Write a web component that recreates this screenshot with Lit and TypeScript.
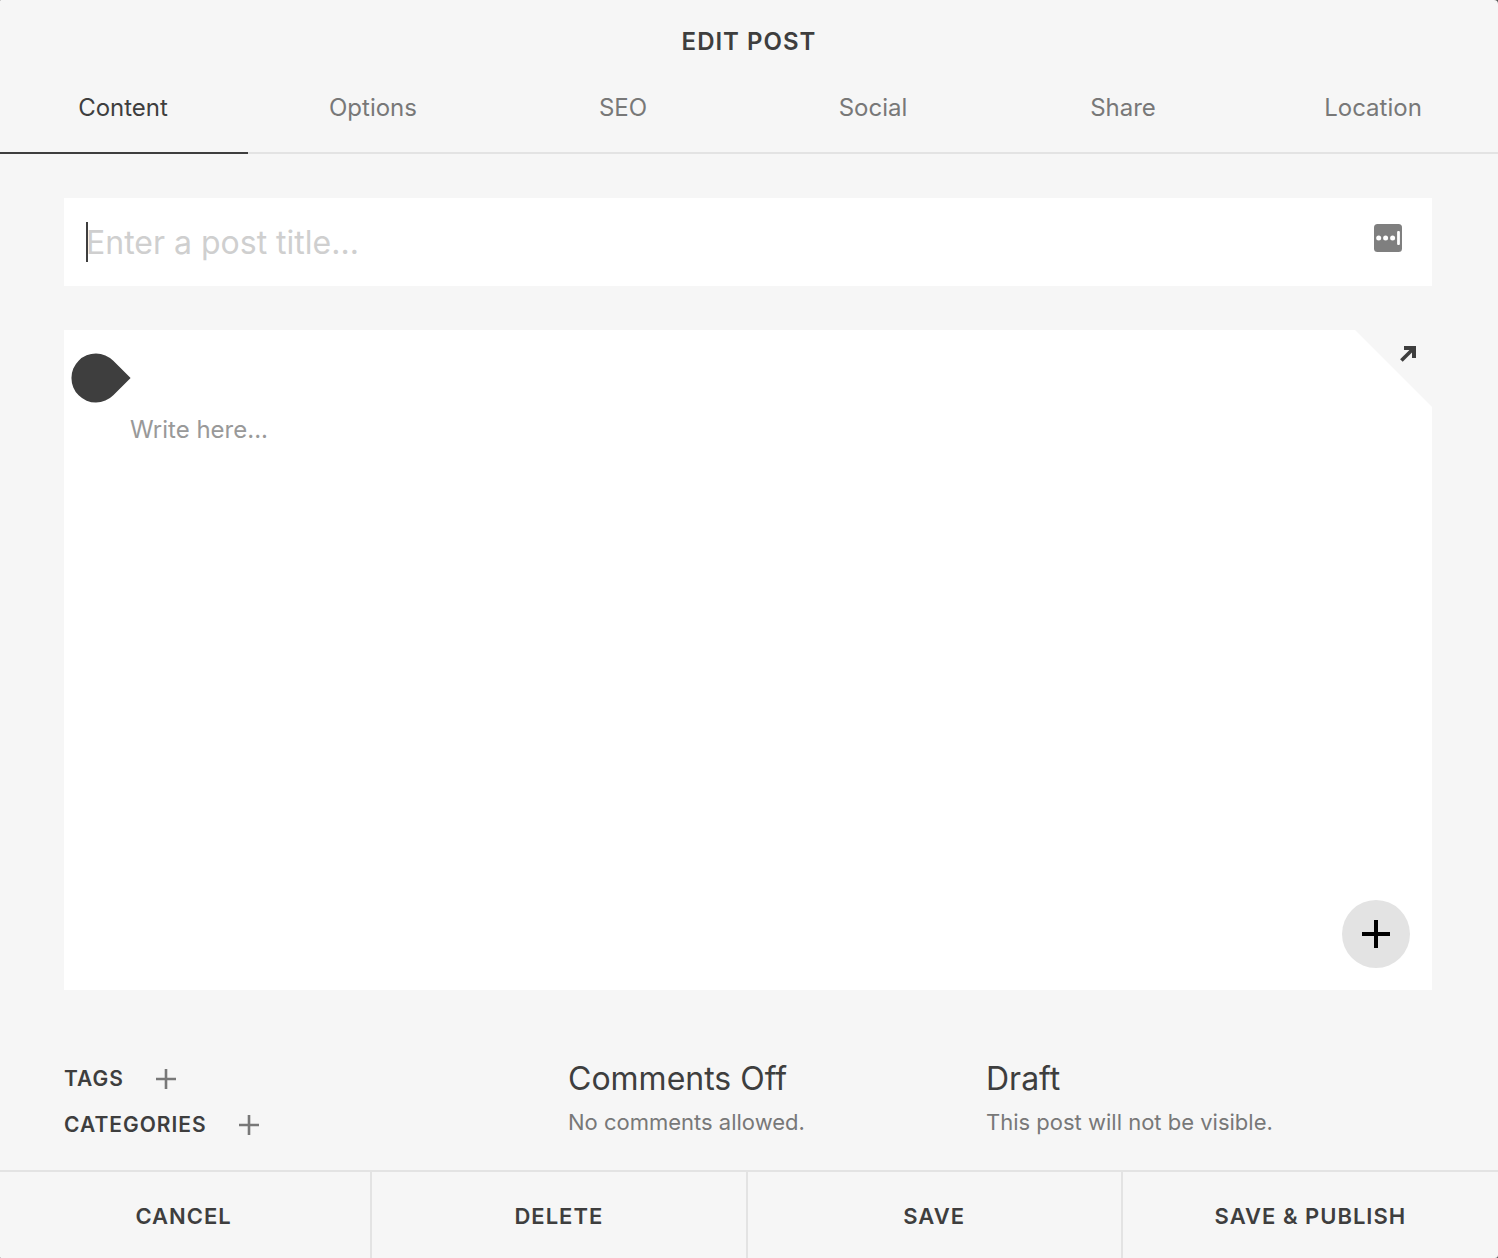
import { LitElement, html, css } from "lit";
import { customElement, state } from "lit/decorators.js";
import { classMap } from "lit/directives/class-map.js";

const TABS = ["Content", "Options", "SEO", "Social", "Share", "Location"];
const ACTIONS = ["Cancel", "Delete", "Save", "Save & Publish"];

@customElement("app-root")
export class AppRoot extends LitElement {
  static styles = css`
    :host {
      display: block;
      background: #555;
      color: #3e3e3e;
      font-family: Inter, "Liberation Sans", sans-serif;
      font-size: 24px;
      line-height: 32px;
    }
    * {
      box-sizing: border-box;
    }
    button,
    input,
    textarea {
      margin: 0;
      padding: 0;
      border: 0;
      border-radius: 0;
      outline: none;
      background: none;
      color: inherit;
      font: inherit;
    }
    button {
      cursor: pointer;
    }
    svg {
      display: block;
    }
    .panel {
      display: flex;
      flex-direction: column;
      min-height: 100vh;
      overflow: hidden;
      background: #f6f6f6;
      border-radius: 1px 4px 3px 1px;
    }
    .title {
      margin: 0;
      padding: 26px 0 18px;
      font-size: 24px;
      font-weight: 600;
      line-height: 32px;
      letter-spacing: 1px;
      text-align: center;
      text-transform: uppercase;
    }
    .tabs {
      display: grid;
      grid-template-columns: repeat(6, 1fr);
      margin-left: -2px;
    }
    .tab {
      height: 78px;
      padding-bottom: 12px;
      border-bottom: 2px solid #e3e3e3;
      color: #787878;
    }
    .tab.active {
      border-color: #3e3e3e;
      color: #3e3e3e;
    }
    .body {
      display: flex;
      flex: 1;
      flex-direction: column;
      gap: 44px;
      padding: 44px 66px 0 64px;
    }
    .title-field {
      position: relative;
      display: flex;
      align-items: center;
      gap: 16px;
      height: 88px;
      padding: 0 30px 0 22px;
      background: #fff;
    }
    .title-input {
      flex: 1;
      min-width: 0;
      height: 88px;
      font-size: 32px;
      font-weight: 400;
    }
    .title-input::placeholder {
      color: #cfcfcf;
      opacity: 1;
    }
    .caret {
      position: absolute;
      left: 22px;
      top: 24px;
      width: 2px;
      height: 40px;
      background: #3e3e3e;
    }
    .autofill {
      padding-bottom: 8px;
    }
    .editor {
      position: relative;
      display: flex;
      flex: 1;
      min-height: 300px;
    }
    .sheet {
      display: flex;
      flex: 1;
      background: #fff;
      clip-path: polygon(
        0 0,
        calc(100% - 77px) 0,
        100% 77px,
        100% 100%,
        0 100%
      );
    }
    .text {
      flex: 1;
      padding: 84px 66px 24px;
      resize: none;
    }
    .text::placeholder {
      color: #999;
      opacity: 1;
    }
    .marker {
      position: absolute;
      left: 7px;
      top: 23px;
    }
    .expand {
      position: absolute;
      right: 12px;
      top: 12px;
      padding: 4px;
    }
    .insert {
      position: absolute;
      right: 22px;
      bottom: 22px;
      display: grid;
      place-items: center;
      width: 68px;
      height: 68px;
      border-radius: 50%;
      background: #e3e3e3;
      color: #000;
    }
    .meta {
      display: grid;
      grid-template-columns: 504fr 418fr 446fr;
      padding: 66px 66px 22px 64px;
    }
    .terms {
      display: flex;
      flex-direction: column;
    }
    .term {
      display: flex;
      align-items: center;
      gap: 32px;
      height: 46px;
      font-size: 21px;
      font-weight: 600;
      letter-spacing: 1px;
      text-transform: uppercase;
    }
    .add {
      color: #787878;
    }
    .status {
      display: flex;
      flex-direction: column;
      align-items: flex-start;
      text-align: left;
    }
    .status-name {
      font-size: 32px;
      line-height: 46px;
    }
    .status-note {
      color: #787878;
      font-size: 22px;
      line-height: 40px;
    }
    .actions {
      display: grid;
      grid-template-columns: repeat(4, 1fr);
      margin-left: -3px;
      border-top: 2px solid #e3e3e3;
    }
    .action {
      height: 86px;
      padding-top: 2px;
      border-right: 2px solid #e3e3e3;
      font-size: 22px;
      font-weight: 600;
      letter-spacing: 1px;
      text-transform: uppercase;
    }
    .action:last-child {
      border-right: 0;
    }
  `;

  @state() private active = "Content";

  private plus() {
    return html`<svg width="20" height="20" viewBox="0 0 20 20" aria-hidden="true">
      <path d="M10 0v20M0 10h20" stroke="currentColor" stroke-width="2.6" />
    </svg>`;
  }

  private term(name: string) {
    return html`<div class="term">
      <span>${name}</span>
      <button class="add" aria-label="Add ${name}">${this.plus()}</button>
    </div>`;
  }

  private status(name: string, note: string) {
    return html`<button class="status">
      <span class="status-name">${name}</span>
      <span class="status-note">${note}</span>
    </button>`;
  }

  render() {
    return html`
      <main class="panel">
        <h1 class="title">Edit Post</h1>
        <nav class="tabs" role="tablist">
          ${TABS.map(
            (tab) => html`<button
              role="tab"
              aria-selected=${this.active === tab}
              class=${classMap({ tab: true, active: this.active === tab })}
              @click=${() => (this.active = tab)}
            >
              ${tab}
            </button>`
          )}
        </nav>

        <section class="body">
          <div class="title-field">
            <input
              class="title-input"
              type="text"
              aria-label="Post title"
              placeholder="Enter a post title..."
            />
            <span class="caret"></span>
            <button class="autofill" aria-label="Autofill">
              <svg width="28" height="28" viewBox="0 0 28 28" aria-hidden="true">
                <rect width="28" height="28" rx="3.5" fill="#7f7f7f" />
                <g fill="#fff">
                  <circle cx="4.7" cy="14" r="2.5" />
                  <circle cx="11.6" cy="14" r="2.5" />
                  <circle cx="18.6" cy="14" r="2.5" />
                  <rect x="23.1" y="7" width="2.8" height="14" rx="1" />
                </g>
              </svg>
            </button>
          </div>

          <div class="editor">
            <div class="sheet">
              <textarea
                class="text"
                aria-label="Post body"
                placeholder="Write here..."
              ></textarea>
            </div>
            <svg class="marker" width="60" height="50" viewBox="0 0 60 50" aria-hidden="true">
              <path
                d="M42.3 7.7A24.5 24.5 0 1 0 42.3 42.3L59.6 25Z"
                fill="#3e3e3e"
              />
            </svg>
            <button class="expand" aria-label="Expand editor">
              <svg width="16" height="16" viewBox="0 0 16 16" aria-hidden="true">
                <path d="M4 0H16V12H12V4H4Z" fill="#3e3e3e" />
                <path d="M1.4 14.6L13 3" stroke="#3e3e3e" stroke-width="3.6" />
              </svg>
            </button>
            <button class="insert" aria-label="Insert block">
              <svg width="28" height="28" viewBox="0 0 28 28" aria-hidden="true">
                <path d="M14 0v28M0 14h28" stroke="currentColor" stroke-width="4" />
              </svg>
            </button>
          </div>
        </section>

        <section class="meta">
          <div class="terms">${this.term("Tags")} ${this.term("Categories")}</div>
          ${this.status("Comments Off", "No comments allowed.")}
          ${this.status("Draft", "This post will not be visible.")}
        </section>

        <footer class="actions">
          ${ACTIONS.map((name) => html`<button class="action">${name}</button>`)}
        </footer>
      </main>
    `;
  }
}
